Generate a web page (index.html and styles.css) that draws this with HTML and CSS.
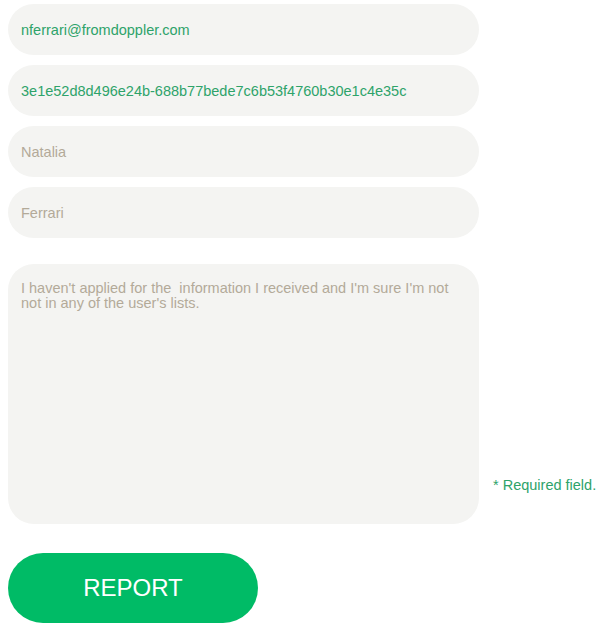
FILE: index.html
```html
<!DOCTYPE html>
<html>
	<head>
		<meta charset="UTF-8">
		<title>Report</title>
		<link rel="stylesheet" href="styles.css">
	</head>
	<body>
		<form class="report-form">
			<input class="field filled" type="text" value="nferrari@fromdoppler.com">
			<input class="field filled" type="text" value="3e1e52d8d496e24b-688b77bede7c6b53f4760b30e1c4e35c">
			<input class="field" type="text" placeholder="Natalia">
			<input class="field" type="text" placeholder="Ferrari">
			<div class="message-row">
				<textarea class="message" placeholder="I haven't applied for the  information I received and I'm sure I'm not not in any of the user's lists."></textarea>
				<span class="required">* Required field.</span>
			</div>
			<button type="button" class="report-btn">REPORT</button>
		</form>
	</body>
</html>
```

FILE: styles.css
```css
body{
    margin: 0;
    padding: 4px 8px;
    background: #fff;
    font-family: "Liberation Sans", Arial, sans-serif;
}
.report-form{
    display: flex;
    flex-direction: column;
    align-items: flex-start;
}
.field{
    box-sizing: border-box;
    width: 471px;
    height: 51px;
    margin: 0 0 10px;
    padding: 0 13px;
    border: none;
    border-radius: 26px;
    background: #f4f4f2;
    font-family: inherit;
    font-size: 14.5px;
    color: #b3aa99;
    outline: none;
}
.field::placeholder{
    color: #b3aa99;
}
.field.filled{
    color: #2ea36a;
}
.message-row{
    display: flex;
    align-items: flex-end;
    margin-top: 16px;
}
.message{
    box-sizing: border-box;
    width: 471px;
    height: 260px;
    padding: 17px 13px;
    border: none;
    border-radius: 26px;
    background: #f4f4f2;
    font-family: inherit;
    font-size: 14.5px;
    line-height: 15px;
    resize: none;
    outline: none;
}
.message::placeholder{
    color: #b3aa99;
}
.required{
    margin: 0 0 31px 14px;
    font-size: 14.5px;
    color: #2ea36a;
    white-space: nowrap;
}
.report-btn{
    width: 250px;
    height: 70px;
    margin-top: 29px;
    border: none;
    border-radius: 35px;
    background: #00bb66;
    color: #fff;
    font-family: inherit;
    font-size: 24px;
    cursor: pointer;
}
```
